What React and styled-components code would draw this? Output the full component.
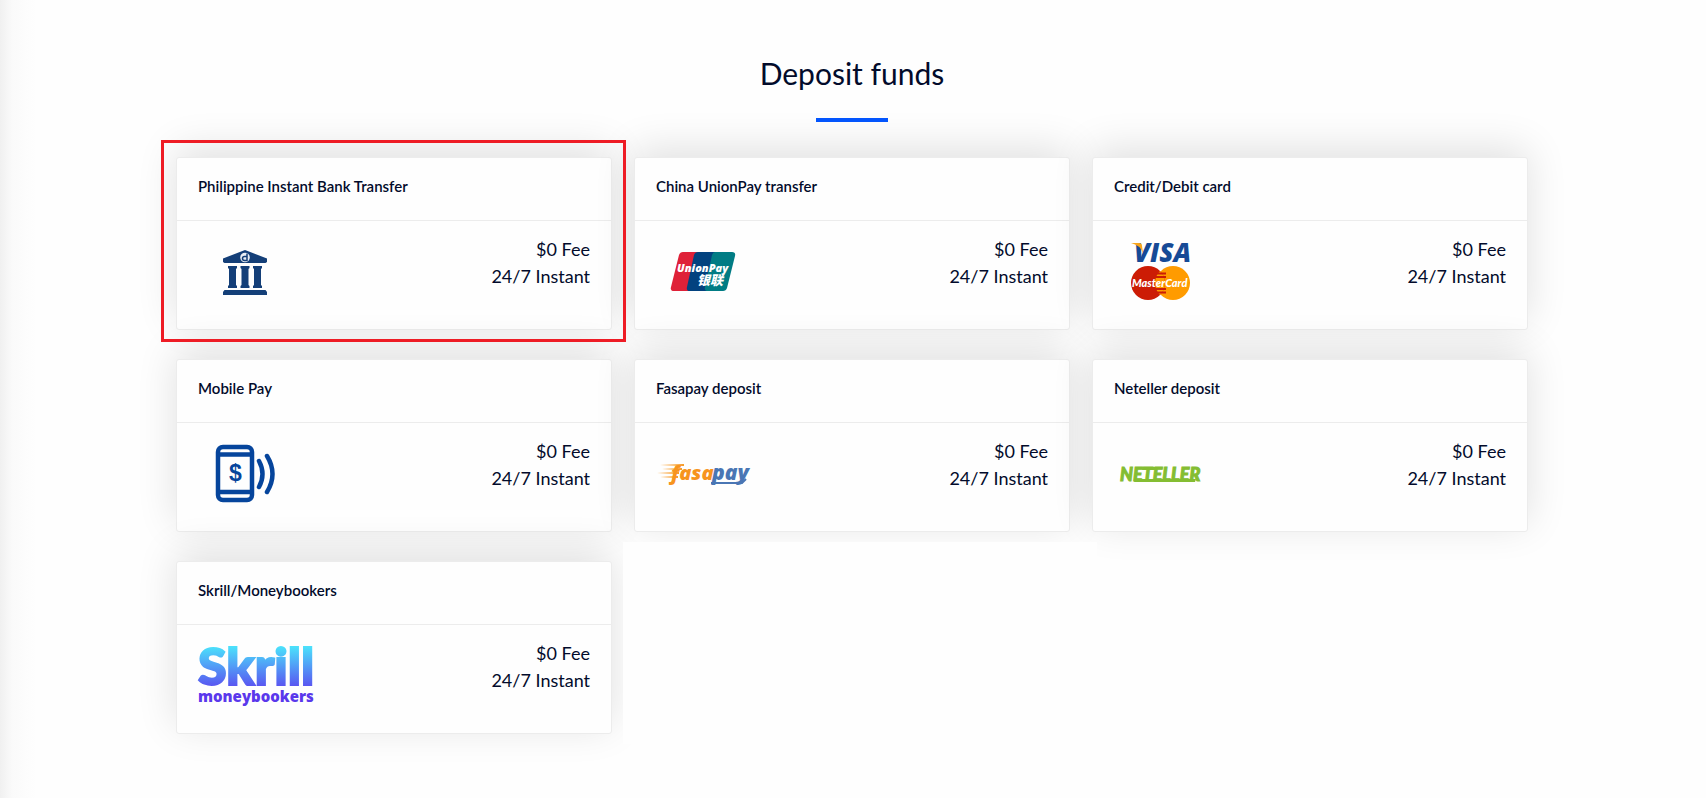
import React from "react";
import styled, { createGlobalStyle } from "styled-components";

const GlobalStyle = createGlobalStyle`
  * { box-sizing: border-box; }
  body {
    margin: 0;
    background: #fefefe;
    color: #020b2b;
    font-family: Lato, "Noto Sans CJK SC", sans-serif;
  }
`;

const Page = styled.main`
  min-height: 100vh;
  padding: 53px 2px 53px 0;
  background: linear-gradient(to right, #f0f0f0, #fafafa 12px, #fefefe 36px);
`;

const Heading = styled.h1`
  display: flex;
  flex-direction: column;
  align-items: center;
  gap: 25px;
  margin: 0;
  font-size: 30px;
  line-height: 40px;
  font-weight: 400;

  &::after {
    content: "";
    width: 72px;
    height: 4px;
    background: #0456ff;
  }
`;

const Methods = styled.ul`
  display: grid;
  grid-template-columns: repeat(3, 1fr);
  width: 81%;
  max-width: 1374px;
  margin: 16px auto 0;
  padding: 0;
  list-style: none;
`;

const Slot = styled.li`
  position: relative;
  padding: 19px 11px 10px 11px;
`;

const Highlight = styled.span`
  position: absolute;
  inset: 2px -3px -2px -4px;
  border: 3px solid #ee1c25;
  pointer-events: none;
  z-index: 2;
`;

const Cover = styled.li`
  position: relative;
  margin-right: -16px;
  background: #fefefe;
`;

const Card = styled.article`
  min-height: 173px;
  border: 1px solid #ececec;
  border-radius: 3px;
  background: #fefefe;
  box-shadow: 0 -8px 40px rgba(0, 0, 0, 0.12);
`;

const CardTitle = styled.h2`
  display: flex;
  align-items: center;
  min-height: 63px;
  margin: 0;
  padding: 0 21px 6px;
  border-bottom: 1px solid #ececec;
  font-size: 15px;
  line-height: 20px;
  font-weight: 600;
`;

const CardBody = styled.div`
  display: flex;
  justify-content: space-between;
  padding: 15px 21px;
`;

const Terms = styled.p`
  margin: 0;
  text-align: right;
  font-size: 18px;
  line-height: 27px;
`;

const Logo = styled.svg`
  display: block;
  width: 120px;
  height: 72px;
  overflow: visible;
`;

const Wordmark = styled.text`
  font-family: ${(p) => p.$family || "Lato"}, "Noto Sans CJK SC", sans-serif;
  font-size: ${(p) => p.$size}px;
  font-weight: ${(p) => p.$weight || 900};
  font-style: ${(p) => (p.$upright ? "normal" : "italic")};
`;

const BankLogo = () => (
  <Logo viewBox="0 0 120 70" role="img" aria-label="Bank">
    <g fill="#143f78">
      <path d="M47 13 69 21.500V25l-1.500 1h-41L25 25v-3.500z" />
      <path d="M30 29h9v2l-1 1v16l1 1v2h-9v-2l1-1V32l-1-1zM42.500 29h9v2l-1 1v16l1 1v2h-9v-2l1-1V32l-1-1zM55 29h9v2l-1 1v16l1 1v2h-9v-2l1-1V32l-1-1z" />
      <path d="M26.500 53h41l1.500 2v3H25v-3z" />
    </g>
    <circle cx="47" cy="20.500" r="4.800" fill="#e9eef4" />
    <path d="M49 16.500v7h-2.500a2 2 0 0 1 0-4H49" fill="none" stroke="#143f78" strokeWidth="1.500" />
  </Logo>
);

const UnionPayLogo = () => (
  <Logo viewBox="0 0 120 70" role="img" aria-label="UnionPay">
    <path d="M27 15h16L34 54H18q-4 0-3-4l8-32q1-3 4-3z" fill="#df2138" />
    <path d="M42 15h22L55 54H34q-4 0-3-4l7-32q1-3 4-3z" fill="#02427f" />
    <path d="M59 15h17q4 0 3 4l-8 32q-1 3-4 3H52q-4 0-3-4l7-32q1-3 3-3z" fill="#017c84" />
    <Wordmark x="21" y="35" fill="#fff" $size={11} $weight={800} $family="Open Sans">UnionPay</Wordmark>
    <Wordmark x="41" y="48" fill="#fff" $size={13}>银联</Wordmark>
  </Logo>
);

const CardLogo = () => (
  <Logo viewBox="0 0 120 70" role="img" aria-label="Visa and MasterCard">
    <Wordmark x="20" y="25" fill="#164a96" $size={26} $weight={800} $family="Open Sans">VISA</Wordmark>
    <path d="M17 6h8q3 0 3 3l1 7Q26 8 17 6z" fill="#f9a51b" />
    <circle cx="59" cy="46" r="17" fill="#ff9b00" />
    <circle cx="34" cy="46" r="17" fill="#cc1c05" />
    <path d="M46 34a17 17 0 0 0 0 24a17 17 0 0 0 0-24z" fill="#ff9b00" />
    <path d="M42 36.500h10M42 40h10M42 52h10M42 55.500h10" stroke="#cc1c05" strokeWidth="2" />
    <Wordmark x="18" y="50" fill="#fff" $size={11}>MasterCard</Wordmark>
  </Logo>
);

const MobileLogo = () => (
  <Logo viewBox="0 0 120 70" role="img" aria-label="Mobile payment">
    <g fill="none" stroke="#06459c" strokeWidth="4.500" strokeLinecap="round">
      <rect x="20" y="8" width="34" height="53" rx="5" />
      <path d="M21 15.500h32M21 53h32M61 22q7 13 0 26M69 17q11 18 0 36" />
    </g>
    <Wordmark x="31" y="42" fill="#06459c" $size={23} $weight={700} $family="Liberation Sans" $upright>$</Wordmark>
  </Logo>
);

const FasapayLogo = () => (
  <Logo viewBox="0 0 120 70" role="img" aria-label="Fasapay">
    <path d="M4 26l24-1v2zM6 30l20-1v2zM1 34l22-1v2zM4 38l18-1v2z" fill="#f79a24" />
    <Wordmark x="15" y="41" fill="#f7941d" $size={20} $weight={800} $family="Open Sans">fasa</Wordmark>
    <Wordmark x="56" y="41" fill="#4a76b4" $size={21} $weight={800} $family="Open Sans">pay</Wordmark>
    <path d="M55 44h31l4-4" fill="none" stroke="#4a76b4" strokeWidth="2" />
  </Logo>
);

const NetellerLogo = () => (
  <Logo viewBox="0 0 120 70" role="img" aria-label="Neteller">
    <Wordmark x="6" y="42" fill="#84bd32" stroke="#84bd32" $size={18}>NETELLER</Wordmark>
    <path d="M20 43l1-3h61l-1 3zM29 28h14l-1 3H28z" fill="#84bd32" />
  </Logo>
);

const SkrillLogo = () => (
  <Logo viewBox="0 0 120 70" role="img" aria-label="Skrill Moneybookers">
    <defs>
      <linearGradient id="skrill" gradientUnits="userSpaceOnUse" x1="0" y1="6" x2="0" y2="45">
        <stop offset="0" stopColor="#4be0fb" />
        <stop offset="1" stopColor="#5956f1" />
      </linearGradient>
    </defs>
    <Wordmark x="0" y="44" fill="url(#skrill)" stroke="url(#skrill)" strokeWidth="2" $size={52} $upright>Skrill</Wordmark>
    <Wordmark x="0" y="61" fill="#5a38ec" $size={15} $weight={800} $family="Open Sans" $upright>moneybookers</Wordmark>
  </Logo>
);

const methods = [
  { name: "Philippine Instant Bank Transfer", Mark: BankLogo, highlighted: true },
  { name: "China UnionPay transfer", Mark: UnionPayLogo },
  { name: "Credit/Debit card", Mark: CardLogo },
  { name: "Mobile Pay", Mark: MobileLogo },
  { name: "Fasapay deposit", Mark: FasapayLogo },
  { name: "Neteller deposit", Mark: NetellerLogo },
  { name: "Skrill/Moneybookers", Mark: SkrillLogo },
];

export default function App() {
  return (
    <Page>
      <GlobalStyle />
      <Heading>Deposit funds</Heading>
      <Methods>
        {methods.map(({ name, Mark, highlighted }) => (
          <Slot key={name}>
            <Card>
              <CardTitle>{name}</CardTitle>
              <CardBody>
                <Mark />
                <Terms>
                  $0 Fee
                  <br />
                  24/7 Instant
                </Terms>
              </CardBody>
            </Card>
            {highlighted && <Highlight />}
          </Slot>
        ))}
        <Cover aria-hidden="true" />
      </Methods>
    </Page>
  );
}
